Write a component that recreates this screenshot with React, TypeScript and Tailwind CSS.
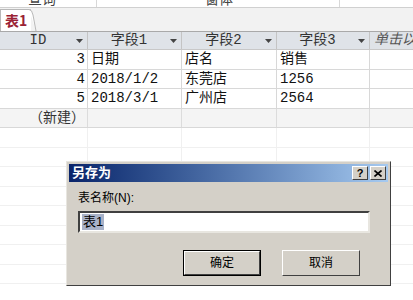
import React from "react";

const cols = [
  { w: 88, label: "ID" },
  { w: 94, label: "字段1" },
  { w: 95, label: "字段2" },
  { w: 93, label: "字段3" },
];

const rows = [
  ["3", "日期", "店名", "销售"],
  ["4", "2018/1/2", "东莞店", "1256"],
  ["5", "2018/3/1", "广州店", "2564"],
];

function Arrow() {
  return (
    <svg width="7" height="4" viewBox="0 0 7 4" className="shrink-0">
      <path d="M0 0h7L3.5 4z" fill="#444" />
    </svg>
  );
}

export default function App() {
  const font = { fontFamily: '"Liberation Mono", "Noto Sans CJK SC", monospace' };
  return (
    <div className="relative w-[413px] h-[300px] overflow-hidden bg-white" style={font}>
      {/* Ribbon remnant */}
      <div className="h-[8px] overflow-hidden border-b border-[#d0d0d0] flex text-[14px] text-[#444]">
        <div className="w-[97px] border-r border-[#d8d8d8] pl-[28px] -mt-[10px]">查询</div>
        <div className="w-[243px] border-r border-[#d8d8d8] pl-[108px] -mt-[10px]">窗体</div>
      </div>

      {/* Tab bar */}
      <div className="h-[24px] bg-[#f2f2f2] flex items-end border-b border-[#a9a9a9]">
        <div className="relative h-[22px] w-[31px] bg-white border-t border-l border-[#b8b8b8] flex items-center pl-[4px] text-[14px] font-bold text-[#9b2335]" style={{ fontFamily: '"Noto Sans CJK SC", sans-serif' }}>
          表1
          <svg className="absolute -right-[6px] top-[-1px]" width="8" height="23" viewBox="0 0 8 23">
            <path d="M0 0.5 Q3 0.5 4 6 L7 22" stroke="#b8b8b8" fill="white" />
          </svg>
        </div>
      </div>

      {/* Header */}
      <div className="flex h-[18px] bg-[#dfe3e8] border-b border-[#c8c8c8] text-[14px] text-[#333]">
        {cols.map((c) => (
          <div key={c.label} className="flex items-center border-r border-[#c4c4c4] pr-[4px]" style={{ width: c.w }}>
            <span className="flex-1 text-center">{c.label}</span>
            <Arrow />
          </div>
        ))}
        <div className="flex-1 pl-[4px] italic text-[#555] flex items-center whitespace-nowrap overflow-hidden">单击以</div>
      </div>

      {/* Rows */}
      {rows.map((r) => (
        <div key={r[0]} className="flex h-[19.5px] border-b border-[#d8d8d8] text-[14px] text-[#111]">
          <div className="w-[88px] border-r border-[#d8d8d8] text-right pr-[2px] leading-[19px]">{r[0]}</div>
          <div className="w-[94px] border-r border-[#d8d8d8] pl-[3px] leading-[19px]">{r[1]}</div>
          <div className="w-[95px] border-r border-[#d8d8d8] pl-[3px] leading-[19px]">{r[2]}</div>
          <div className="w-[93px] border-r border-[#d8d8d8] pl-[3px] leading-[19px]">{r[3]}</div>
          <div className="flex-1" />
        </div>
      ))}
      <div className="flex h-[19.5px] border-b border-[#d8d8d8] bg-[#f4f4f4] text-[14px] text-[#333]">
        <div className="w-[88px] border-r border-[#dcdcdc] text-right pr-[2px] leading-[19px]">（新建）</div>
        <div className="w-[94px] border-r border-[#dcdcdc]" />
        <div className="w-[95px] border-r border-[#dcdcdc]" />
        <div className="w-[93px] border-r border-[#dcdcdc]" />
      </div>
      {[0, 1, 2, 3, 4, 5, 6, 7].map((i) => (
        <div key={i} className="flex h-[19.5px] border-b border-[#f0f0f0]">
          <div className="w-[88px] border-r border-[#f0f0f0]" />
          <div className="w-[94px] border-r border-[#f0f0f0]" />
          <div className="w-[95px] border-r border-[#f0f0f0]" />
          <div className="w-[93px] border-r border-[#f0f0f0]" />
        </div>
      ))}

      {/* Save As dialog */}
      <div
        className="absolute left-[66px] top-[161px] w-[325px] h-[125px] bg-[#d4d0c8] border border-t-[#e8e6e0] border-l-[#e8e6e0] border-r-[#404040] border-b-[#404040] p-[2px] flex flex-col"
        style={{ fontFamily: '"Liberation Sans", "Noto Sans CJK SC", sans-serif' }}
      >
        <div className="h-[18px] bg-gradient-to-r from-[#0a246a] to-[#a6caf0] flex items-center pl-[3px] pr-[2px]">
          <span className="flex-1 text-white font-bold text-[13px]">另存为</span>
          <div className="flex gap-[2px]">
            <div className="w-[16px] h-[14px] bg-[#d4d0c8] border border-t-white border-l-white border-r-[#404040] border-b-[#404040] flex items-center justify-center text-[11px] font-bold leading-none text-black">?</div>
            <div className="w-[16px] h-[14px] bg-[#d4d0c8] border border-t-white border-l-white border-r-[#404040] border-b-[#404040] flex items-center justify-center">
              <svg width="8" height="7" viewBox="0 0 8 7">
                <path d="M0.5 0.5 L7.5 6.5 M7.5 0.5 L0.5 6.5" stroke="black" strokeWidth="1.6" />
              </svg>
            </div>
          </div>
        </div>
        <div className="pl-[9px] pr-[18px] pt-[8px] flex flex-col">
          <div className="text-[12px] text-black leading-[16px]">表名称(N):</div>
          <div className="mt-[5px] h-[22px] bg-white border-2 border-t-[#404040] border-l-[#404040] border-r-[#e8e6e0] border-b-[#e8e6e0] flex items-center pl-[2px]">
            <span className="bg-[#a9b2c8] text-[13px] text-black leading-[16px] px-[1px]">表1</span>
          </div>
          <div className="flex justify-end gap-[21px] mt-[17px] pr-[10px]">
            <div className="w-[78px] h-[26px] border border-black">
              <div className="w-full h-full border border-t-white border-l-white border-r-[#404040] border-b-[#404040] flex items-center justify-center text-[12px] text-black">确定</div>
            </div>
            <div className="w-[78px] h-[26px] border border-t-white border-l-white border-r-[#404040] border-b-[#404040] flex items-center justify-center text-[12px] text-black">取消</div>
          </div>
        </div>
      </div>
    </div>
  );
}
